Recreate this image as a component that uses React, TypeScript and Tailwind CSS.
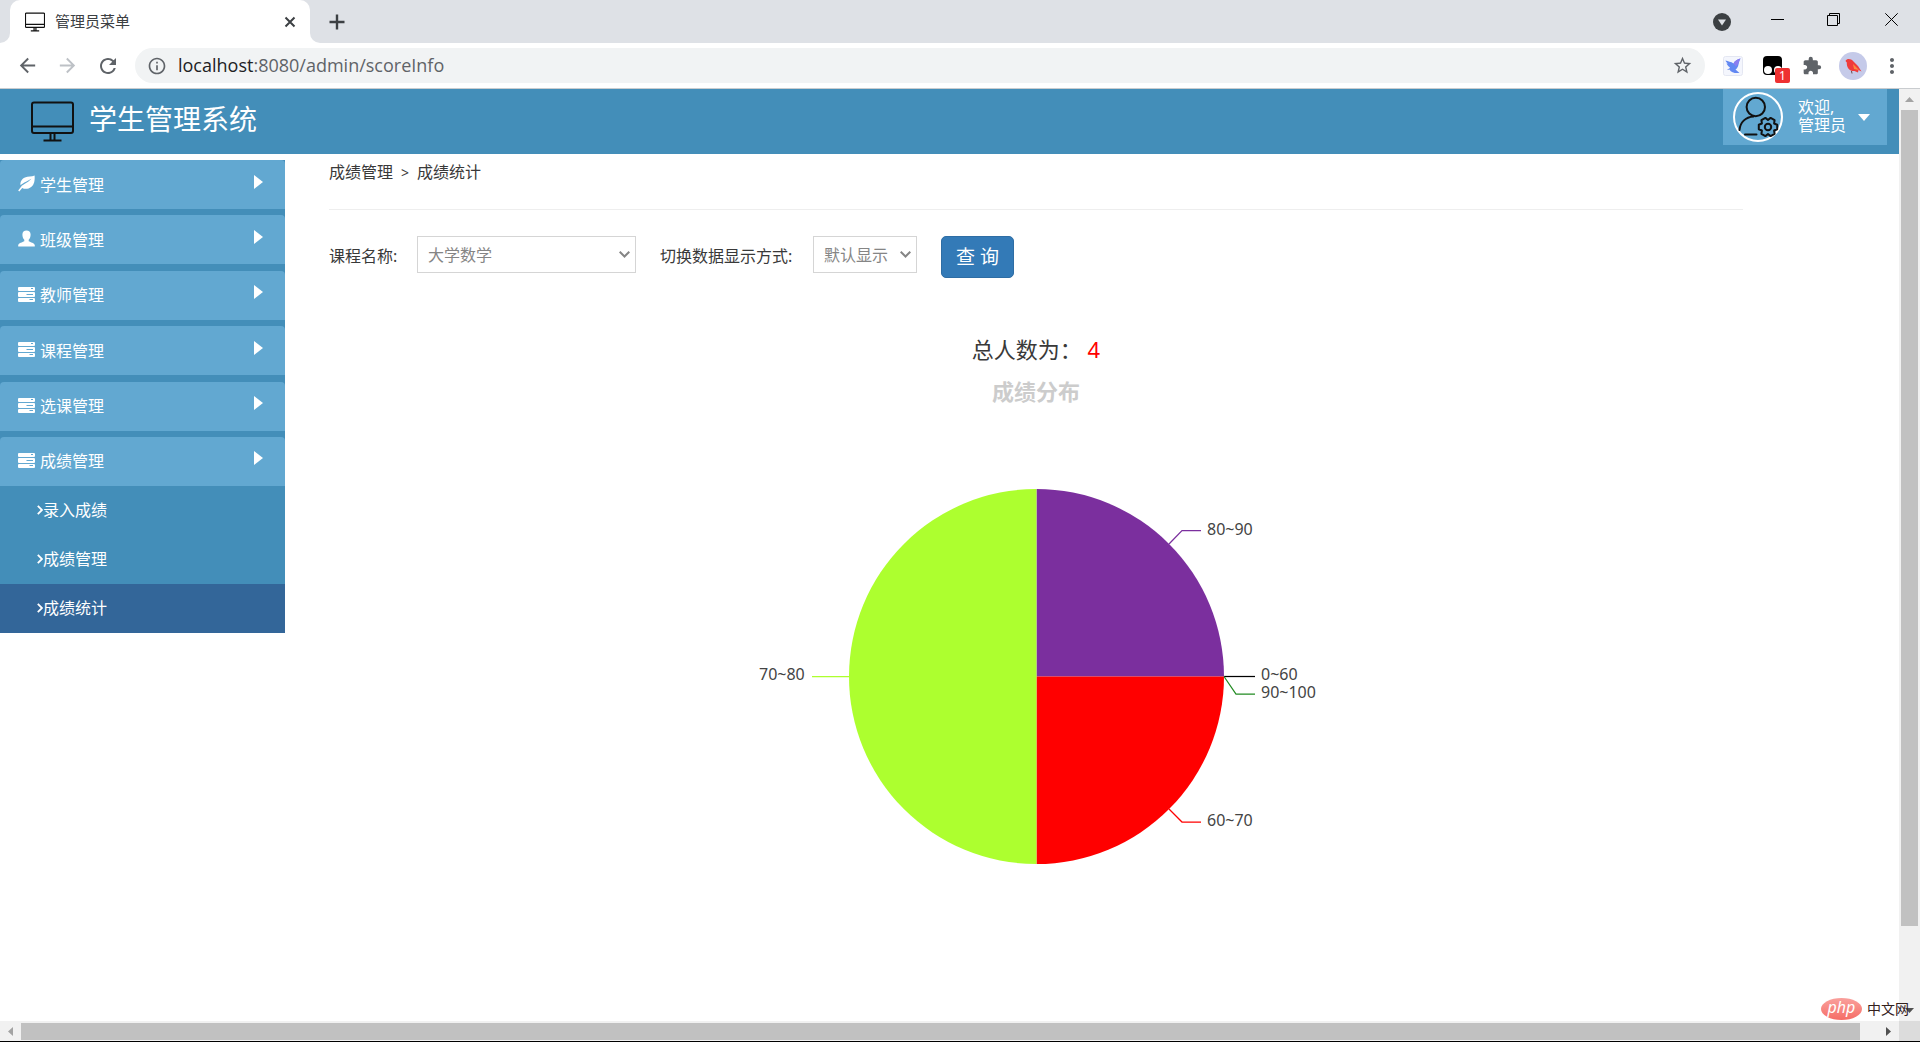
import React, { useState } from 'react'
import {
  MdArrowBack,
  MdArrowForward,
  MdRefresh,
  MdOutlineInfo,
  MdStarBorder,
  MdExtension,
  MdMoreVert
} from 'react-icons/md'

interface MenuItem {
  label: string
  icon: React.ReactNode
}

interface Slice {
  name: string
  value: number
  color: string
}

const MonitorIcon = ({ className }: { className?: string }) => (
  <svg className={className} viewBox="0 0 43 40" fill="none" stroke="#111">
    <rect x="1" y="1" width="41" height="30.5" rx="2" />
    <path d="M1 25h41M19.5 32v6.5M23.5 32v6.5M12.5 39h18" />
  </svg>
)

const LeafIcon = () => (
  <svg className="w-[17px] h-[17px]" viewBox="0 0 17 17" fill="currentColor">
    <path d="M16.6 0.4C17 5 16.300 9.600 13.200 12 10.300 14.200 6.500 14.300 4.200 12.900L1.300 16.400 0.200 15.600 3.100 11.700C3.400 10.500 6.500 8.800 9.300 7.200 11 6.200 12.200 5.200 13.300 3.800 11.600 5 9.800 5.900 8 6.700 5.700 7.800 3.900 8.800 2.600 10.300 1.900 6.800 3.700 3.800 7 2.400 10.200 1.100 13.600 1.900 16.600 0.400Z" />
  </svg>
)

const UserIcon = () => (
  <svg className="w-[17px] h-[17px]" viewBox="0 0 17 17" fill="currentColor">
    <path d="M8.500 0.500C11 0.500 12.600 2 12.600 4.600 12.600 6.800 12 8.600 10.700 9.700V11.200C12.500 12.200 16.500 13 16.800 15.200V16.500H0.200V15.200C0.500 13 4.500 12.200 6.300 11.200V9.700C5 8.600 4.400 6.800 4.400 4.600 4.400 2 6 0.500 8.500 0.500Z" />
  </svg>
)

const ServerIcon = () => (
  <svg className="w-[17px] h-[17px]" viewBox="0 0 17 17">
    <rect x="0" y="1" width="17" height="4" rx="1" fill="currentColor" />
    <rect x="0" y="6" width="17" height="5" rx="1" fill="currentColor" />
    <rect x="0" y="12" width="17" height="4" rx="1" fill="currentColor" />
    <path d="M13 2.500h2M8.500 8.500h6.500M11.500 13.500h3.500" stroke="#62a8d1" strokeWidth="1" />
  </svg>
)

const AdminAvatar = () => (
  <svg className="w-[50px] h-[50px] shrink-0" viewBox="0 0 50 50" fill="none" stroke="#111" strokeWidth="2">
    <circle cx="25" cy="25" r="24" stroke="#fff" />
    <circle cx="22.800" cy="15" r="9.200" />
    <path d="M6.500 38C7 30.500 12.500 25 20.500 24.500M12 42.500h11.500" strokeLinecap="round" />
    <path d="M44.200 32.700V37.300L41.100 38.500 41.600 41.800 37.600 44.100 35 42 32.400 44.100 28.400 41.800 28.900 38.500 25.800 37.300V32.700L28.900 31.500 28.400 28.200 32.400 25.900 35 28 37.600 25.900 41.600 28.200 41.100 31.500Z" strokeLinejoin="round" />
    <circle cx="35" cy="35" r="3.200" />
  </svg>
)

const menus: MenuItem[] = [
  { label: '学生管理', icon: <LeafIcon /> },
  { label: '班级管理', icon: <UserIcon /> },
  { label: '教师管理', icon: <ServerIcon /> },
  { label: '课程管理', icon: <ServerIcon /> },
  { label: '选课管理', icon: <ServerIcon /> },
  { label: '成绩管理', icon: <ServerIcon /> }
]

const subMenus = ['录入成绩', '成绩管理', '成绩统计']

const slices: Slice[] = [
  { name: '80~90', value: 1, color: '#7b2f9e' },
  { name: '60~70', value: 1, color: '#ff0000' },
  { name: '70~80', value: 2, color: '#adff2f' }
]

// leader line and label position for every score range
const labels = [
  { name: '80~90', color: '#7b2f9e', points: '433,68 446,54.5 465,54.5', x: 471, y: 59 },
  { name: '0~60', color: '#000000', points: '488,200.5 519,200.5', x: 525, y: 204 },
  { name: '90~100', color: '#228b22', points: '488,200.5 500,218 519,218', x: 525, y: 222 },
  { name: '60~70', color: '#ff0000', points: '433,333 446,346 465,346', x: 471, y: 350 },
  { name: '70~80', color: '#adff2f', points: '113,200.5 76,200.5', x: 23, y: 204 }
]

const CX = 300.5
const CY = 200.5
const R = 187.5

const slicePath = (start: number, end: number) => {
  const a = start * 2 * Math.PI - Math.PI / 2
  const b = end * 2 * Math.PI - Math.PI / 2
  return `M${CX} ${CY}L${CX + R * Math.cos(a)} ${CY + R * Math.sin(a)}A${R} ${R} 0 0 1 ${CX + R * Math.cos(b)} ${CY + R * Math.sin(b)}Z`
}

const ScorePie = () => {
  const total = slices.reduce((sum, s) => sum + s.value, 0)
  let start = 0
  return (
    <svg className="w-[600px] h-[400px]" viewBox="0 0 600 400" role="img" aria-label="成绩分布">
      {slices.map(s => {
        const from = start
        start += s.value / total
        return <path key={s.name} d={slicePath(from, start)} fill={s.color} />
      })}
      {labels.map(l => (
        <g key={l.name}>
          <polyline points={l.points} fill="none" stroke={l.color} strokeWidth="1.25" />
          <text x={l.x} y={l.y} fill="#444" className="text-base">
            {l.name}
          </text>
        </g>
      ))}
    </svg>
  )
}

const BrowserChrome = () => (
  <div className="shrink-0">
    <div className="h-[43px] bg-[#dee1e6] flex items-start justify-between">
      <div className="flex items-center h-full">
        <div className="w-[10px] h-full bg-white">
          <div className="h-full bg-[#dee1e6] rounded-br-[10px]" />
        </div>
        <div className="w-[300px] h-full bg-white rounded-t-[10px] flex items-center pl-[15px] pr-[14px]">
          <MonitorIcon className="w-5 h-5 stroke-[2.6]" />
          <span className="ml-[10px] text-[15px] text-[#3c4043] flex-1">管理员菜单</span>
          <button aria-label="关闭标签页">
            <svg className="w-3 h-3" viewBox="0 0 12 12" stroke="#3c4043" strokeWidth="2"><path d="M1.500 1.500l9 9M10.500 1.500l-9 9" /></svg>
          </button>
        </div>
        <div className="w-[10px] h-full bg-white">
          <div className="h-full bg-[#dee1e6] rounded-bl-[10px]" />
        </div>
        <button aria-label="新标签页" className="ml-[9px]">
          <svg className="w-4 h-4" viewBox="0 0 16 16" stroke="#3c4043" strokeWidth="2.400"><path d="M8 0.500v15M0.500 8h15" /></svg>
        </button>
      </div>
      <div className="flex items-center h-[38px] pr-[22px]">
        <button aria-label="搜索标签页" className="mr-[40px] pt-[6px]">
          <svg className="w-[18px] h-[18px]" viewBox="0 0 18 18"><circle cx="9" cy="9" r="9" fill="#3c4043" /><path d="M5 6.500h8L9 12.500z" fill="#dee1e6" /></svg>
        </button>
        <button aria-label="最小化" className="mr-[43px]">
          <svg className="w-[13px] h-[13px]" viewBox="0 0 13 13" stroke="#000"><path d="M0 6.500h13" /></svg>
        </button>
        <button aria-label="还原" className="mr-[45px]">
          <svg className="w-[13px] h-[13px]" viewBox="0 0 13 13" fill="none" stroke="#000"><path d="M0.500 2.500h10v10h-10zM2.500 2.500v-2h10v10h-2" /></svg>
        </button>
        <button aria-label="关闭">
          <svg className="w-[13px] h-[13px]" viewBox="0 0 13 13" stroke="#000"><path d="M0.300 0.300l12.400 12.400M12.700 0.300L0.300 12.700" /></svg>
        </button>
      </div>
    </div>
    <div className="h-[46px] bg-white border-b border-[#c9cccf] flex items-center pl-4 text-[#5f6368]">
      <button aria-label="后退" className="mr-[17px]"><MdArrowBack size={23} /></button>
      <button aria-label="前进" className="mr-[17px] text-[#bdc1c6]"><MdArrowForward size={23} /></button>
      <button aria-label="刷新" className="mr-[15px]"><MdRefresh size={24} /></button>
      <div className="flex-1 h-[35px] rounded-full bg-[#f1f3f4] flex items-center px-[12px]">
        <MdOutlineInfo size={20} />
        <p className="ml-[11px] flex-1 text-[18px] font-['Open_Sans','Noto_Sans',sans-serif]">
          <span className="text-[#202124]">localhost</span>:8080/admin/scoreInfo
        </p>
        <button aria-label="收藏"><MdStarBorder size={21} /></button>
      </div>
      <div className="flex items-center ml-[18px] pr-[16px]">
        <svg className="w-5 h-5" viewBox="0 0 20 20">
          <rect x="0.500" y="0.500" width="19" height="19" rx="2" fill="#f4f6fd" stroke="#e4e7f2" />
          <path d="M2.500 4.500C5 5.500 8 5.500 10.500 7.500 11.500 5 14 3.500 17.500 2.500 16 5 16 6.500 15.500 8.500 15 11 14 12.500 12.500 13.500L16.500 17C12 17.500 8 16.500 6.500 13.500 5.500 14 4.500 13.700 4 13 5.500 13 6.500 12.500 7 11.500 5 10 3.800 8.500 3.600 7.200L5 7.500C3.500 6.500 2.800 5.700 2.500 4.500Z" fill="#6288f2" />
          <path d="M17.500 2.500C14 3.500 11.500 5 10.500 7.500L13 10.500C15.500 8.500 16 5 17.500 2.500Z" fill="#8b7df0" />
        </svg>
        <div className="relative ml-5 w-[19px] h-[19px]">
          <svg className="w-[19px] h-[19px]" viewBox="0 0 19 19">
            <rect width="19" height="19" rx="4" />
            <circle cx="5" cy="14" r="4" fill="#fff" />
            <circle cx="15" cy="14" r="4" fill="#fff" />
          </svg>
          <span className="absolute left-3 top-3 w-[15px] h-[15px] rounded-[2px] bg-[#ee3131] text-white text-xs leading-[15px] text-center">1</span>
        </div>
        <button aria-label="扩展程序" className="ml-5"><MdExtension size={20} /></button>
        <svg className="ml-[17px] w-7 h-7" viewBox="0 0 28 28">
          <circle cx="14" cy="14" r="14" fill="#c5cae9" />
          <path d="M6.500 9C8 6.500 11.500 6.300 14.500 9.500L19 14 22.500 19.500 19.500 18 19 20.500 15.500 19C11 19.500 7.500 16 7.800 10.500Z" fill="#ef3b3b" />
          <path d="M14 12l6 6-5-1z" fill="#ff8a3c" />
          <path d="M12.500 19l.500 2.500" stroke="#6b4a4a" />
        </svg>
        <button aria-label="更多" className="ml-[13px]"><MdMoreVert size={24} /></button>
      </div>
    </div>
  </div>
)

const PageHeader = () => (
  <header className="h-[65px] bg-[#438eb9] text-white flex justify-between items-start">
    <a href="#" className="flex items-start pl-[31px] pt-3">
      <MonitorIcon className="w-[43px] h-[41px] stroke-2" />
      <span className="ml-[15px] text-[28px] leading-9">学生管理系统</span>
    </a>
    <button className="h-14 mr-3 pl-[10px] pr-[17px] bg-[#62a8d1] flex items-center text-left">
      <AdminAvatar />
      <span className="ml-[15px] pb-[2px] text-base leading-[18px]">
        欢迎,
        <br />
        管理员
      </span>
      <svg className="ml-3 w-3 h-[7px]" viewBox="0 0 12 7" fill="currentColor"><path d="M0 0h12L6 7z" /></svg>
    </button>
  </header>
)

interface SidebarProps {
  active: string
  onSelect: (name: string) => void
}

const Sidebar: React.FC<SidebarProps> = ({ active, onSelect }) => (
  <nav className="w-[285px] shrink-0 mt-[6px] bg-[#438eb9] text-white text-base self-start">
    <ul className="min-h-[326px] flex flex-col justify-between">
      {menus.map(menu => (
        <li key={menu.label}>
          <button className="w-full h-[49px] pl-[18px] pr-[22px] rounded-t bg-[#62a8d1] flex items-center">
            <span className="pb-[2px]">{menu.icon}</span>
            <span className="ml-[5px] flex-1 text-left">{menu.label}</span>
            <svg className="w-[9px] h-[14px] mb-[6px]" viewBox="0 0 9 14" fill="currentColor"><path d="M0 0l9 7-9 7z" /></svg>
          </button>
        </li>
      ))}
    </ul>
    <ul>
      {subMenus.map(name => (
        <li key={name}>
          <a
            href="#"
            onClick={() => onSelect(name)}
            className={`h-[49px] pl-[37px] pb-[2px] flex items-center ${active === name ? 'bg-[#336699]' : ''}`}
          >
            <svg className="w-[6px] h-[10px]" viewBox="0 0 6 10" fill="none" stroke="currentColor" strokeWidth="1.800"><path d="M0.800 0.800L5 5 0.800 9.200" /></svg>
            {name}
          </a>
        </li>
      ))}
    </ul>
  </nav>
)

interface SelectBoxProps {
  id: string
  options: string[]
  className: string
}

const SelectBox: React.FC<SelectBoxProps> = ({ id, options, className }) => (
  <div className={`relative ${className}`}>
    <select id={id} className="w-full h-[37px] pl-[10px] appearance-none border border-[#d5d5d5] bg-white text-base text-[#858585]">
      {options.map(o => <option key={o}>{o}</option>)}
    </select>
    <svg className="absolute right-[6px] top-[15px] w-[11px] h-[7px] pointer-events-none" viewBox="0 0 11 7" fill="none" stroke="#858585" strokeWidth="2"><path d="M0.700 0.700l4.800 4.800 4.800-4.800" /></svg>
  </div>
)

const ScoreStatistics = () => (
  <main className="flex-1 pl-[44px] pr-[156px] text-[#393939]">
    <div className="h-14 pt-[6px] border-b border-[#eee] text-base leading-6">
      成绩管理<span className="mx-2 text-sm">&gt;</span>成绩统计
    </div>
    <form className="mt-[26px] flex items-start text-base" onSubmit={e => e.preventDefault()}>
      <label htmlFor="course" className="w-[88px] pt-2">课程名称:</label>
      <SelectBox id="course" options={['大学数学']} className="w-[219px]" />
      <label htmlFor="mode" className="ml-6 w-[153px] pt-2">切换数据显示方式:</label>
      <SelectBox id="mode" options={['默认显示']} className="w-[104px]" />
      <button type="submit" className="ml-6 w-[73px] h-[42px] rounded-[5px] border border-[#2e6da4] bg-[#337ab7] text-white text-[19px] leading-8">
        查 询
      </button>
    </form>
    <div className="mt-[53px] flex flex-col items-center">
      <p className="text-[22px] leading-9">
        总人数为： <span className="text-[#ff0000]">4</span>
      </p>
      <h3 className="mt-[6px] text-[22px] leading-9 font-bold text-[#ccc]">成绩分布</h3>
      <div className="mt-[67px]">
        <ScorePie />
      </div>
    </div>
  </main>
)

const VerticalScrollbar = () => (
  <div className="w-[21px] shrink-0 bg-[#f1f1f1] flex flex-col items-center">
    <div className="h-[21px] flex items-center">
      <svg className="w-[9px] h-[5px]" viewBox="0 0 9 5" fill="#a3a3a3"><path d="M4.500 0L9 5H0z" /></svg>
    </div>
    <div className="w-[17px] flex-[816] bg-[#c1c1c1]" />
    <div className="flex-[74]" />
    <div className="h-[21px] flex items-center">
      <svg className="w-[9px] h-[5px]" viewBox="0 0 9 5" fill="#505050"><path d="M4.500 5L9 0H0z" /></svg>
    </div>
  </div>
)

const HorizontalScrollbar = () => (
  <div className="h-5 shrink-0 bg-[#f1f1f1] flex items-center">
    <div className="w-[21px] flex justify-center">
      <svg className="w-[5px] h-[9px]" viewBox="0 0 5 9" fill="#a3a3a3"><path d="M0 4.500L5 0v9z" /></svg>
    </div>
    <div className="h-[17px] flex-1 bg-[#c1c1c1]" />
    <div className="w-[39px] flex justify-end pr-[8px]">
      <svg className="w-[5px] h-[9px]" viewBox="0 0 5 9" fill="#505050"><path d="M5 4.500L0 0v9z" /></svg>
    </div>
    <div className="w-[21px] h-full bg-[#dcdcdc]" />
  </div>
)

export default function App() {
  const [active, setActive] = useState('成绩统计')

  return (
    <div className="relative h-screen flex flex-col overflow-hidden bg-white border-b border-black font-['Noto_Sans','Noto_Sans_CJK_SC',sans-serif]">
      <BrowserChrome />
      <div className="flex-1 min-h-0 flex">
        <div className="flex-1 min-w-0 overflow-hidden">
          <PageHeader />
          <div className="flex">
            <Sidebar active={active} onSelect={setActive} />
            <ScoreStatistics />
          </div>
        </div>
        <VerticalScrollbar />
      </div>
      <HorizontalScrollbar />
      <div className="absolute right-[11px] bottom-[21px] flex items-center gap-[5px]">
        <span className="w-[41px] h-[22px] rounded-[50%] bg-linear-to-b from-[#f9a09c] to-[#f56c66] text-white text-base leading-[19px] italic text-center">php</span>
        <span className="text-sm leading-5 text-[#33201c]">中文网</span>
      </div>
    </div>
  )
}
